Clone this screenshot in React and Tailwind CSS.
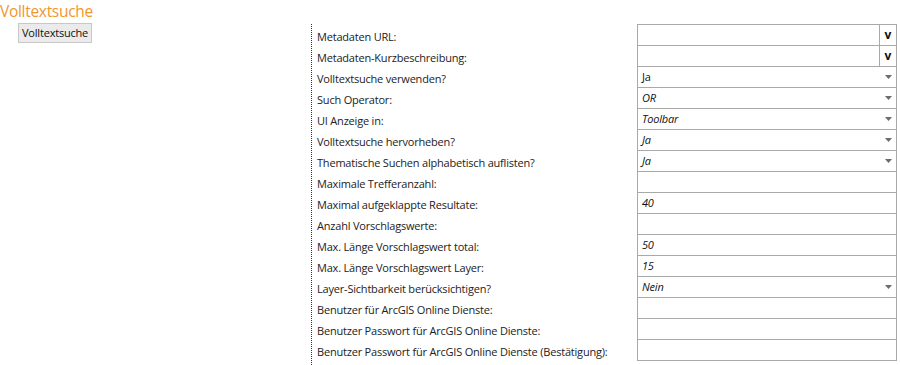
import React from "react";

const rows = [
  { label: "Metadaten URL:", type: "url" },
  { label: "Metadaten-Kurzbeschreibung:", type: "url" },
  { label: "Volltextsuche verwenden?", type: "select", value: "Ja", italic: false },
  { label: "Such Operator:", type: "select", value: "OR", italic: true },
  { label: "UI Anzeige in:", type: "select", value: "Toolbar", italic: true },
  { label: "Volltextsuche hervorheben?", type: "select", value: "Ja", italic: true },
  { label: "Thematische Suchen alphabetisch auflisten?", type: "select", value: "Ja", italic: true },
  { label: "Maximale Trefferanzahl:", type: "text", value: "" },
  { label: "Maximal aufgeklappte Resultate:", type: "text", value: "40" },
  { label: "Anzahl Vorschlagswerte:", type: "text", value: "" },
  { label: "Max. Länge Vorschlagswert total:", type: "text", value: "50" },
  { label: "Max. Länge Vorschlagswert Layer:", type: "text", value: "15" },
  { label: "Layer-Sichtbarkeit berücksichtigen?", type: "select", value: "Nein", italic: true },
  { label: "Benutzer für ArcGIS Online Dienste:", type: "text", value: "" },
  { label: "Benutzer Passwort für ArcGIS Online Dienste:", type: "text", value: "" },
  { label: "Benutzer Passwort für ArcGIS Online Dienste (Bestätigung):", type: "text", value: "" },
];

function Arrow() {
  return (
    <svg width="7" height="4" viewBox="0 0 7 4" className="shrink-0">
      <polygon points="0,0 7,0 3.5,4" fill="#6b6b6b" />
    </svg>
  );
}

function Field({ row, last }) {
  const base =
    "h-[21px] w-[260px] border-l border-r border-t border-[#a9a9a9] flex items-center " +
    (last ? "h-[22px] border-b " : "");
  if (row.type === "url") {
    return (
      <div className={base}>
        <div className="flex-1 h-full" />
        <div className="w-[17px] h-full border-l border-[#a9a9a9] flex items-center justify-center text-[12px] font-bold text-[#111]">
          v
        </div>
      </div>
    );
  }
  if (row.type === "select") {
    return (
      <div className={base + " pl-[4px] pr-[4px] justify-between"}>
        <span className={"text-[11px] tracking-[-0.2px] text-[#111] " + (row.italic ? "italic" : "")}>{row.value}</span>
        <Arrow />
      </div>
    );
  }
  return (
    <div className={base + " pl-[4px]"}>
      <span className="text-[11px] tracking-[-0.2px] italic text-[#111]">{row.value}</span>
    </div>
  );
}

export default function App() {
  return (
    <div
      className="w-[900px] h-[365px] bg-white overflow-hidden"
      style={{ fontFamily: "'Segoe UI', 'Open Sans', 'Noto Sans', sans-serif" }}
    >
      <div className="h-[24px] text-[15.5px] leading-[22px] text-[#f0962d] tracking-[-0.3px]">Volltextsuche</div>
      <div className="flex">
        <div className="w-[311px] shrink-0 pl-[18px]">
          <div className="w-fit -mt-[1px] h-[20px] px-[3px] bg-[#ebebeb] border border-[#c8c8c8] text-[11px] leading-[18px] text-[#111] tracking-[-0.2px]">
            Volltextsuche
          </div>
        </div>
        <div className="w-[326px] shrink-0 border-l border-dotted border-[#333] pl-[5px] h-[341px]">
          {rows.map((r, i) => (
            <div key={i} className="h-[21px] pt-[4px] text-[11px] leading-[17px] text-[#222] whitespace-nowrap tracking-[-0.2px]">
              {r.label}
            </div>
          ))}
        </div>
        <div className="flex flex-col">
          {rows.map((r, i) => (
            <Field key={i} row={r} last={i === rows.length - 1} />
          ))}
        </div>
      </div>
    </div>
  );
}
